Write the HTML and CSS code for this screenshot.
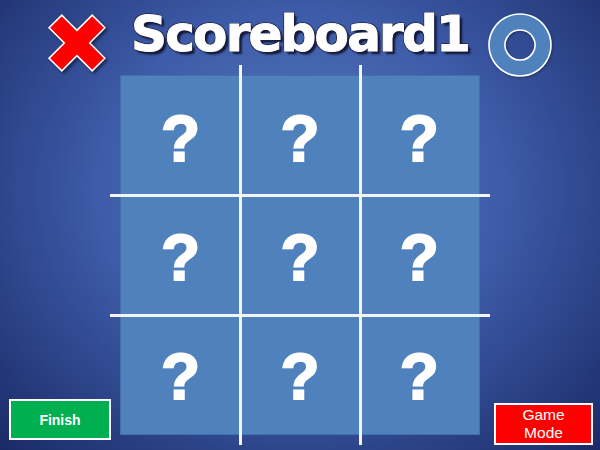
FILE: index.html
```html
<!DOCTYPE html>
<html>
<head>
<meta charset="utf-8">
<link rel="stylesheet" href="styles.css">
</head>
<body>
<div class="page">
  <div class="side side-left">
    <svg class="icon-x" width="62" height="62" viewBox="-3 -3 62 62">
      <polygon points="0.07,12.8 12.8,0.07 28,15.27 43.2,0.07 55.9,12.8 40.73,28 55.9,43.2 43.2,55.9 28,40.73 12.8,55.9 0.07,43.2 15.27,28" fill="#ff0000" stroke="#ffffff" stroke-width="1.6" stroke-linejoin="miter"/>
    </svg>
    <div class="btn btn-finish">Finish</div>
  </div>
  <div class="center">
    <div class="title">Scoreboard1</div>
    <div class="board-wrap">
      <div class="board">
        <div class="cell">?</div><div class="cell">?</div><div class="cell">?</div>
        <div class="cell">?</div><div class="cell">?</div><div class="cell">?</div>
        <div class="cell">?</div><div class="cell">?</div><div class="cell">?</div>
      </div>
      <div class="line vline v1"></div>
      <div class="line vline v2"></div>
      <div class="line hline h1"></div>
      <div class="line hline h2"></div>
    </div>
  </div>
  <div class="side side-right">
    <svg class="icon-o" width="66" height="66" viewBox="0 0 66 66">
      <path d="M33 2 A31 31 0 1 1 32.99 2 Z M33 18 A15 15 0 1 0 33.01 18 Z" fill="#4f81bd" fill-rule="evenodd" stroke="#ffffff" stroke-width="1.6"/>
    </svg>
    <div class="btn btn-mode">Game<br>Mode</div>
  </div>
</div>
</body>
</html>
```

FILE: styles.css
```css
html, body {
  margin: 0;
  padding: 0;
}

body {
  width: 600px;
  height: 450px;
  overflow: hidden;
  background: radial-gradient(ellipse farthest-corner at 50% 42%, #5a7cc0 0%, #3d5ba8 48%, #1a2a66 100%);
  font-family: "Liberation Sans", Arial, sans-serif;
}

.page {
  width: 600px;
  height: 450px;
  display: grid;
  grid-template-columns: 110px 380px 110px;
}

.side {
  display: flex;
  flex-direction: column;
  justify-content: space-between;
}

.icon-x {
  display: block;
  margin: 12px 0 0 46px;
  filter: drop-shadow(2px 2px 1.5px rgba(10, 15, 40, 0.6));
}

.icon-o {
  display: block;
  margin: 12px 0 0 -3px;
  filter: drop-shadow(1px 1px 1px rgba(10, 15, 40, 0.4));
}

.btn {
  box-sizing: border-box;
  border: 2px solid #ffffff;
  color: #ffffff;
  display: flex;
  align-items: center;
  justify-content: center;
  text-align: center;
}

.btn-finish {
  width: 102px;
  height: 41px;
  margin: 0 0 10px 9px;
  background: #00b050;
  font-weight: bold;
  font-size: 14px;
}

.btn-mode {
  width: 99px;
  height: 42px;
  margin: 0 0 5px 4px;
  background: #ff0000;
  font-size: 15.5px;
  line-height: 18px;
}

.center {
  display: flex;
  flex-direction: column;
}

.title {
  height: 65px;
  box-sizing: border-box;
  padding-top: 4px;
  line-height: 61px;
  text-align: center;
  font-family: "DejaVu Sans", sans-serif;
  font-weight: bold;
  font-size: 50px;
  letter-spacing: -1.8px;
  color: #ffffff;
  white-space: nowrap;
  -webkit-text-stroke: 1px #ffffff;
  text-shadow: -1px -1px 0 #1e2240, 1px -1px 0 #1e2240, -1px 1px 0 #1e2240, 1px 1px 0 #1e2240, 3px 3px 2px rgba(10, 12, 35, 0.85);
}

.board-wrap {
  position: relative;
  width: 380px;
  height: 380px;
  box-sizing: border-box;
  padding: 10px;
}

.board {
  width: 360px;
  height: 360px;
  box-sizing: border-box;
  border: 1px solid #4470a8;
  background: #4f81bd;
  display: grid;
  grid-template-columns: repeat(3, 1fr);
  grid-template-rows: repeat(3, 1fr);
}

.cell {
  display: flex;
  align-items: center;
  justify-content: center;
  box-sizing: border-box;
  padding-top: 6px;
  color: #ffffff;
  font-family: "Liberation Sans", Arial, sans-serif;
  font-weight: bold;
  font-size: 64px;
  line-height: 1;
  -webkit-text-stroke: 2px #ffffff;
}

.line {
  position: absolute;
  background: #f4f4f4;
}

.vline {
  top: 0;
  width: 3px;
  height: 380px;
}

.v1 { left: 129px; }
.v2 { left: 249px; }

.hline {
  left: 0;
  height: 3px;
  width: 380px;
}

.h1 { top: 129px; }
.h2 { top: 249px; }
```
